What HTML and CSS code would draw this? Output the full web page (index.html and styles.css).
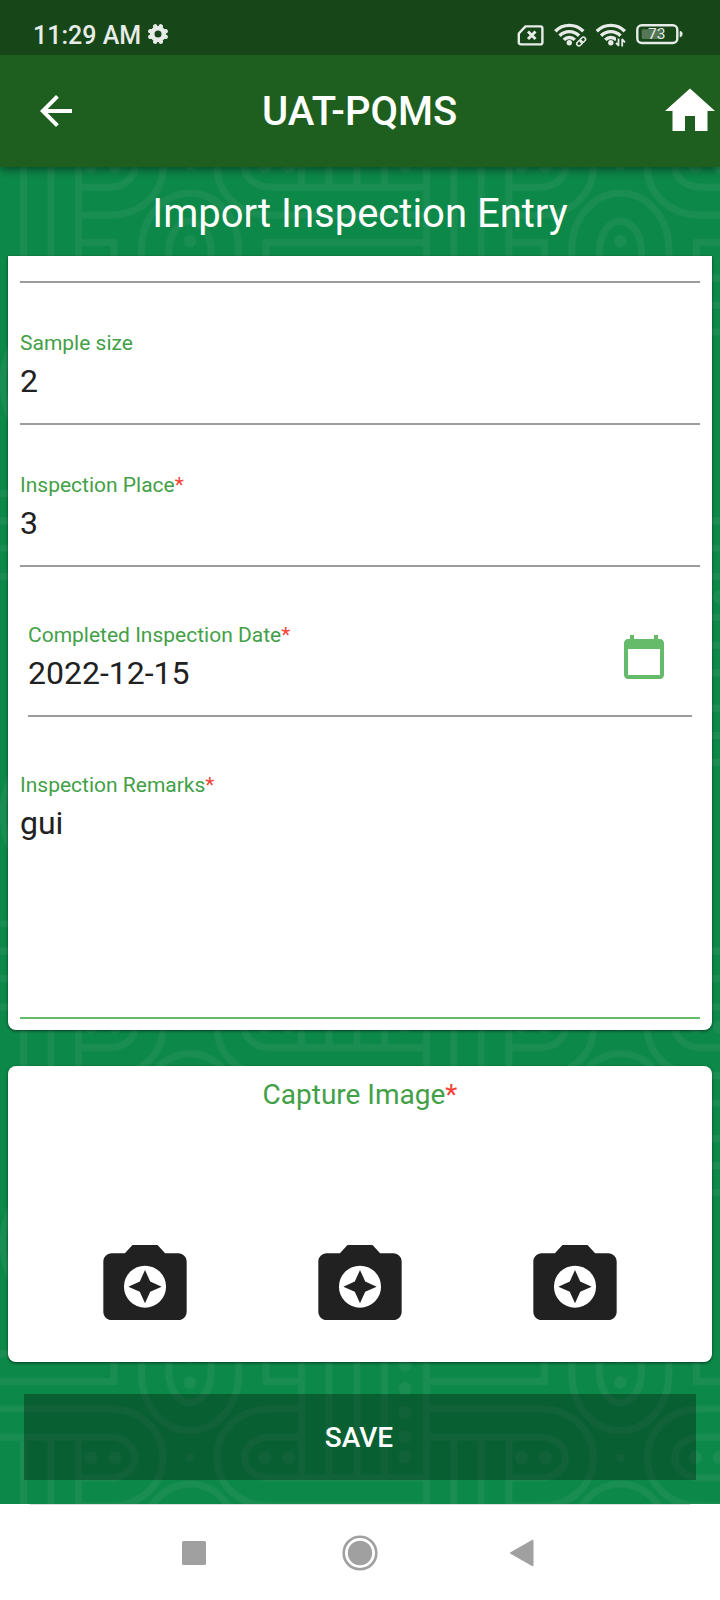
FILE: index.html
```html
<!DOCTYPE html>
<html lang="en">
<head>
<meta charset="utf-8">
<title>Import Inspection Entry</title>
<link rel="stylesheet" href="styles.css">
</head>
<body>
<div class="screen">
  <svg class="backdrop" width="720" height="1504" aria-hidden="true">
    <defs>
      <g id="ovals">
        <rect x="141.5" y="144" width="97" height="377" rx="48.5" ry="56"/>
        <rect x="169" y="172" width="42" height="321" rx="21" ry="30"/>
      </g>
      <pattern id="tile" width="430.4" height="430.3" patternUnits="userSpaceOnUse" patternTransform="translate(0 1340)">
        <g class="lines">
          <use href="#ovals"/>
          <use href="#ovals" y="-430.3"/>
          <path d="M0 69H110C140 69 163 90 163 117.500S140 166 110 166H78"/>
          <path d="M0 97H110C124 97 135 106 135 117.500S124 138 110 138H78"/>
          <path d="M23.500 97V431M51 97V431M78.500 97V431"/>
          <path d="M0 14H8M0 41.500H114V0M78 193.500H114V431"/>
          <path d="M301.500 69H270C240 69 217 90 217 117.500S240 166 270 166H426"/>
          <path d="M301.500 97H270C256 97 244.500 106 244.500 117.500S256 138 270 138H426"/>
          <path d="M301.500 0V138M329 0V138M357 0V138M384.500 0V138M426.500 0V431"/>
          <path d="M301.500 41.500H266V0M426 193.500H266V431M266 229H301M266 256H301M266 283H301"/>
          <ellipse cx="50" cy="334" rx="47" ry="62"/>
        </g>
        <g class="dots">
          <circle cx="91" cy="117.500" r="6.500"/><circle cx="115" cy="117.500" r="6.500"/>
          <circle cx="265" cy="117.500" r="6.500"/><circle cx="289" cy="117.500" r="6.500"/>
          <rect x="186.500" y="114" width="7" height="7"/>
          <circle cx="190" cy="18" r="6"/><circle cx="190" cy="42.500" r="6.300"/><circle cx="190" cy="192" r="6.300"/>
          <circle cx="405" cy="25" r="6.500"/><circle cx="405" cy="48.500" r="6.500"/><circle cx="405" cy="72.500" r="6.500"/>
          <circle cx="405" cy="96.500" r="6.500"/><circle cx="405" cy="117" r="6.500"/>
        </g>
      </pattern>
    </defs>
    <rect width="720" height="1504" fill="url(#tile)"/>
  </svg>

  <header class="top">
    <div class="status">
      <span class="clock">11:29 AM</span>
      <svg class="gear" width="20" height="20" viewBox="0 0 20 20"><circle cx="10" cy="10" r="5.800" fill="none" stroke="currentColor" stroke-width="4.600"/><g fill="none" stroke="currentColor" stroke-width="4.400" stroke-linecap="round"><path d="M7.200 2.300L7.400 3M12.800 2.300L12.600 3M7.200 17.700L7.400 17M12.800 17.700L12.600 17M2.300 7.200L3 7.400M2.300 12.800L3 12.600M17.700 7.200L17 7.400M17.700 12.800L17 12.600"/></g></svg>
      <svg class="indicators" width="170" height="30" viewBox="0 0 170 30">
        <g fill="none" stroke="currentColor" stroke-width="2.400">
          <path d="M8.500 6.400H23.500Q25.400 6.400 25.400 8.300V22.500Q25.400 24.400 23.500 24.400H4Q1.800 24.400 1.800 22.500V13.500Z" stroke-linejoin="round"/>
          <path d="M11 11.500L18.500 19M18.500 11.500L11 19" stroke-width="2.900"/>
          <g id="wifi" stroke-width="3.400">
            <path d="M38.300 11.300A19.500 19.500 0 0 1 66.300 11.300"/>
            <path d="M42.600 15.700A13.500 13.500 0 0 1 62 15.700"/>
            <path d="M46.800 19.900A7.500 7.500 0 0 1 57.800 19.900"/>
            <circle cx="52.300" cy="22.800" r="1.400" stroke-width="2.600"/>
          </g>
          <use href="#wifi" x="41.500"/>
          <g class="badge-gap"><path d="M58.500 22.500L69 15.500V27H58.500Z"/><path d="M99 18H108V27H99Z"/></g>
          <g stroke-width="1.600" transform="rotate(-45 64 21.500)"><rect x="58.800" y="19.500" width="6" height="4.200" rx="2.100"/><rect x="63.400" y="19.500" width="6" height="4.200" rx="2.100"/></g>
          <path d="M101.500 18.500V26M101.900 26L99 22.800M105.200 26.500V19M104.800 19L108 22.300" stroke-width="1.800"/>
          <rect x="120.300" y="5.200" width="40" height="17.800" rx="4.500"/>
        </g>
        <rect x="124.700" y="9.200" width="20" height="9.800" rx="1.500" fill="currentColor" opacity=".3"/>
        <path d="M163 11.300Q165.300 11.300 165.300 14T163 17Z" fill="currentColor" stroke="currentColor" stroke-width=".6"/>
        <text x="131" y="19.300" class="charge">73</text>
      </svg>
    </div>
    <div class="appbar">
      <svg class="back" width="48" height="48" viewBox="0 0 24 24"><path fill="currentColor" d="M20 11H7.830l5.590-5.590L12 4l-8 8 8 8 1.410-1.410L7.830 13H20z"/></svg>
      <h1 class="brand">UAT-PQMS</h1>
      <svg class="home" width="60" height="60" viewBox="0 0 24 24"><path fill="currentColor" d="M10 20v-6h4v6h5v-8h3L12 3 2 12h3v8z"/></svg>
    </div>
  </header>

  <main class="content">
    <h2 class="title">Import Inspection Entry</h2>
    <section class="card form">
      <div class="rule"></div>
      <div class="field"><label>Sample size</label><div class="value">2</div></div>
      <div class="field"><label>Inspection Place<b>*</b></label><div class="value">3</div></div>
      <div class="inset">
        <div class="field"><label>Completed Inspection Date<b>*</b></label><div class="value">2022-12-15</div>
          <svg class="calendar" width="48" height="48" viewBox="0 0 24 24"><path fill="currentColor" d="M20 3h-1V1h-2v2H7V1H5v2H4c-1.100 0-2 .9-2 2v16c0 1.100.9 2 2 2h16c1.100 0 2-.9 2-2V5c0-1.100-.9-2-2-2zm0 18H4V8h16v13z"/></svg>
        </div>
      </div>
      <div class="field remarks"><label>Inspection Remarks<b>*</b></label><div class="value">gui</div></div>
    </section>

    <section class="card capture">
      <h3 class="caption">Capture Image<b>*</b></h3>
      <svg width="0" height="0" class="symbols"><symbol id="camera" viewBox="0 0 24 24"><path fill-rule="evenodd" d="M20 4.400h-3.170L15 2.400H9L7.170 4.400H4c-1.100 0-2 .9-2 2v12c0 1.100.9 2 2 2h16c1.100 0 2-.9 2-2v-12c0-1.100-.9-2-2-2zm-8 13.050a5.050 5.050 0 1 1 0-10.100 5.050 5.050 0 0 1 0 10.100zM12 16.400l1.250-2.750L16 12.400l-2.750-1.250L12 8.400l-1.250 2.750L8 12.400l2.750 1.250z"/></symbol></svg>
      <div class="cameras">
        <svg class="camera"><use href="#camera"/></svg>
        <svg class="camera"><use href="#camera"/></svg>
        <svg class="camera"><use href="#camera"/></svg>
      </div>
    </section>

    <button class="save">SAVE</button>
  </main>

  <nav class="navbar">
    <svg width="36" height="36" viewBox="0 0 36 36"><rect x="6" y="6" width="24" height="24" rx="1.500" fill="currentColor"/></svg>
    <svg width="36" height="36" viewBox="0 0 36 36"><circle cx="18" cy="18" r="16.300" fill="none" stroke="currentColor" stroke-width="2.600"/><circle cx="18" cy="18" r="12.200" fill="currentColor"/></svg>
    <svg width="36" height="36" viewBox="0 0 36 36"><path d="M7 18L28.500 5.800V30.200Z" fill="currentColor" stroke="currentColor" stroke-width="2" stroke-linejoin="round"/></svg>
  </nav>
</div>
</body>
</html>
```
FILE: styles.css
```css
* { box-sizing: border-box; }
body { margin: 0; font-family: Roboto, sans-serif; }
h1, h2, h3 { margin: 0; font-weight: 400; }
svg { display: block; flex: none; }
b { color: #f44336; font-weight: 400; }

.screen {
  position: relative;
  width: 720px;
  height: 1600px;
  display: flex;
  flex-direction: column;
  background: #0c8848;
  overflow: hidden;
}
.backdrop { position: absolute; left: 0; top: 0; }
.lines { fill: none; stroke: #1a8d52; stroke-width: 7; }
.dots { fill: #1a8d52; }

.top {
  position: relative;
  z-index: 1;
  height: 167px;
  color: #fff;
  background: #1e5f20;
  box-shadow: 0 3px 8px rgba(0, 0, 0, .45);
}
.status {
  height: 55px;
  padding: 15px 33px 0 33px;
  display: flex;
  align-items: flex-start;
  background: #174618;
  color: #e8ece8;
}
.clock { font-size: 25px; font-weight: 500; line-height: 42px; width: 115px; white-space: nowrap; }
.gear { margin-top: 9px; }
.indicators { margin: 5px 0 0 auto; }
.charge { font-size: 15.5px; font-weight: 400; fill: currentColor; }
.badge-gap { fill: #174618; stroke: none; }

.appbar {
  height: 112px;
  padding: 0 0 0 32px;
  display: flex;
  align-items: center;
}
.brand { flex: 1; font-size: 40px; font-weight: 500; line-height: 48px; padding: 2px 0 0 182px; }
.home { margin-bottom: 1px; }

.content { position: relative; height: 1337px; padding: 0 8px; }
.title { height: 89px; padding-top: 23px; font-size: 40px; line-height: 48px; text-align: center; color: #fff; }

.card { background: #fff; box-shadow: 0 1px 3px rgba(0, 0, 0, .55); }
.form { height: 774px; padding: 0 12px; border-radius: 0 0 8px 8px; }
.rule { height: 27px; border-bottom: 2px solid #9c9c9c; }
.field {
  position: relative;
  height: 142px;
  padding-top: 48px;
  border-bottom: 2px solid #9c9c9c;
}
.field label { display: block; font-size: 21px; line-height: 24px; color: #43a047; }
.value { margin-top: 6px; font-size: 32px; line-height: 40px; color: #212121; }
.inset { padding: 8px; }
.remarks { height: 294px; border-color: #66bb6a; }
.calendar { position: absolute; right: 24px; top: 58px; color: #66bb6a; }

.capture { height: 296px; margin-top: 36px; padding-top: 13px; border-radius: 8px; }
.caption { font-size: 28px; line-height: 32px; color: #43a047; text-align: center; }
.symbols { position: absolute; }
.cameras { display: flex; justify-content: space-around; padding: 124px 30px 0; }
.camera { width: 100px; height: 100px; fill: #212121; }

.save {
  display: block;
  width: 672px;
  height: 86px;
  margin: 32px auto 0;
  padding: 1px 2px 0 0;
  border: 0;
  background: rgba(0, 0, 0, .3);
  color: #fff;
  font: 500 28px/86px Roboto, sans-serif;
}

.navbar {
  position: relative;
  height: 96px;
  padding: 1px 180px 0 176px;
  display: grid;
  grid-template-columns: 130px 1fr 130px;
  justify-items: center;
  align-items: center;
  background: linear-gradient(#ddd, #ddd) 30px 0 / 660px 1px no-repeat #fff;
  color: #a0a0a0;
}
.navbar svg:first-child { justify-self: start; }
.navbar svg:nth-child(2) { margin-left: 4px; }
.navbar svg:last-child { justify-self: end; }
```
